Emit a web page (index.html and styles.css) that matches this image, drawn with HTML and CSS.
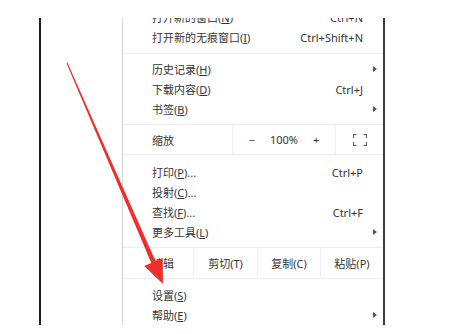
FILE: index.html
```html
<!DOCTYPE html>
<html lang="zh-CN">
  <head>
    <meta charset="UTF-8" />
    <title>菜单</title>
    <link rel="stylesheet" href="styles.css">
  </head>
  <body>
    <div class="shot">
      <div class="gutter"></div>
      <div class="menu">
        <div class="item"><span>打开新的窗口(<u>N</u>)</span><span class="key">Ctrl+N</span></div>
        <div class="item"><span>打开新的无痕窗口(<u>I</u>)</span><span class="key">Ctrl+Shift+N</span></div>
        <div class="sep"></div>
        <div class="item"><span>历史记录(<u>H</u>)</span><span class="arrow"></span></div>
        <div class="item"><span>下载内容(<u>D</u>)</span><span class="key">Ctrl+J</span></div>
        <div class="item"><span>书签(<u>B</u>)</span><span class="arrow"></span></div>
        <div class="zoom-row">
          <div class="cell label">缩放</div>
          <div class="cell zoom-group">
            <span>−</span><span>100%</span><span>+</span>
          </div>
          <div class="cell center">
            <svg class="full-icon" width="14" height="12" viewBox="0 0 14 12">
              <path d="M0.5 4V0.5H3.5M10.5 0.5H13.5V4M13.5 8V11.5H10.5M3.5 11.5H0.5V8" fill="none" stroke="#666" stroke-width="1.2"/>
            </svg>
          </div>
        </div>
        <div class="item first-after"><span>打印(<u>P</u>)...</span><span class="key">Ctrl+P</span></div>
        <div class="item"><span>投射(<u>C</u>)...</span></div>
        <div class="item"><span>查找(<u>F</u>)...</span><span class="key">Ctrl+F</span></div>
        <div class="item"><span>更多工具(<u>L</u>)</span><span class="arrow"></span></div>
        <div class="edit-row">
          <div class="cell label">编辑</div>
          <div class="cell center">剪切(T)</div>
          <div class="cell center">复制(C)</div>
          <div class="cell center">粘贴(P)</div>
        </div>
        <div class="item first-after"><span>设置(<u>S</u>)</span></div>
        <div class="item"><span>帮助(<u>E</u>)</span><span class="arrow"></span></div>
      </div>
    </div>

    <!-- red pointer drawn over the screenshot -->
    <svg class="pointer" width="451" height="334" viewBox="0 0 451 334">
      <polygon points="67.5,62.8 155.5,261 162.6,258 163,284 144.2,266 151.3,262.9 66.5,63.2" fill="#ec2f2a"/>
    </svg>
  </body>
</html>
```

FILE: styles.css
```css
body {
  margin: 0;
  width: 451px;
  height: 334px;
  background-color: white;
  font-family: "Noto Sans", "Noto Sans CJK SC", sans-serif;
  font-size: 11px;
  color: #353535;
  position: relative;
  overflow: hidden;
}
.shot {
  display: flex;
  box-sizing: border-box;
  width: 346px;
  height: 307px;
  margin: 18px 0 0 39px;
  border-left: 2px solid #1e1e1e;
  border-right: 2px solid #3c3c3c;
  overflow: hidden;
}
.gutter {
  width: 81px;
  flex-shrink: 0;
}
.menu {
  flex: 1;
  margin-top: -11px;
  border-left: 1px solid #d4d4d4;
}
.item {
  display: flex;
  align-items: center;
  height: 20px;
  padding: 0 6px 0 29px;
  white-space: nowrap;
}
.item u {
  text-decoration-thickness: 1px;
  text-underline-offset: 1px;
}
.key {
  margin-left: auto;
  margin-right: 14px;
}
.arrow {
  margin-left: auto;
  width: 0;
  height: 0;
  border-top: 3px solid transparent;
  border-bottom: 3px solid transparent;
  border-left: 4px solid #555;
}
.sep {
  height: 1px;
  background-color: #ececec;
  margin: 6px 0 5px;
}
.zoom-row {
  display: grid;
  grid-template-columns: 109px 103px 1fr;
  height: 29px;
  margin-top: 5px;
  border-top: 1px solid #ececec;
  border-bottom: 1px solid #ececec;
}
.edit-row {
  display: grid;
  grid-template-columns: 70px 64px 63px 1fr;
  height: 30px;
  margin-top: 5px;
  border-top: 1px solid #ececec;
  border-bottom: 1px solid #ececec;
}
.cell {
  display: flex;
  align-items: center;
  border-left: 1px solid #eeeeee;
}
.cell.label {
  border-left: none;
  padding-left: 29px;
}
.cell.center {
  justify-content: center;
}
.zoom-group {
  justify-content: center;
  gap: 15px;
}
.first-after {
  margin-top: 6px;
}
.zoom-row + .first-after {
  margin-top: 7px;
}
.pointer {
  position: absolute;
  left: 0;
  top: 0;
}
```
